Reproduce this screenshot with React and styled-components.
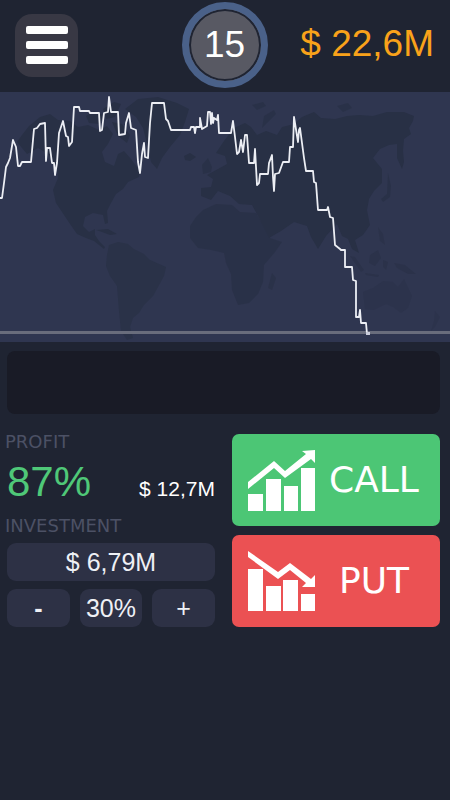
import React, { useState } from "react";
import styled, { createGlobalStyle } from "styled-components";

const GlobalStyle = createGlobalStyle`
  *, *::before, *::after { box-sizing: border-box; }
  body {
    margin: 0;
    background: #1f2432;
    color: #fff;
    font-family: "Liberation Sans", Arial, sans-serif;
  }
  button { font: inherit; color: inherit; border: 0; padding: 0; cursor: pointer; }
`;

const Page = styled.div`
  min-height: 100vh;
  background: #1f2432;
`;

const Header = styled.header`
  display: grid;
  grid-template-columns: 1fr auto 1fr;
  align-items: center;
  height: 92px;
  padding: 0 16px 2px 15px;
`;

const MenuButton = styled.button`
  display: flex;
  flex-direction: column;
  align-items: center;
  justify-content: center;
  gap: 7px;
  width: 63px;
  height: 63px;
  border-radius: 17px;
  background: #383844;
`;

const MenuBar = styled.span`
  width: 42px;
  height: 8px;
  border-radius: 2px;
  background: #fff;
`;

const Countdown = styled.div`
  display: flex;
  align-items: center;
  justify-content: center;
  width: 86px;
  height: 86px;
  border: 7px solid #4a6189;
  border-radius: 50%;
  background: #585963;
  box-shadow: inset 0 0 0 2px #1f2432;
  font-size: 37px;
  line-height: 40px;
`;

const Balance = styled.div`
  justify-self: end;
  color: #f9a21a;
  font-size: 37px;
  line-height: 44px;
  padding-bottom: 2px;
  white-space: nowrap;
`;

const ChartPanel = styled.section`
  height: 250px;
  background: #2f3650;
`;

const ChartSvg = styled.svg`
  display: block;
  width: 100%;
  height: 100%;
`;

const Console = styled.main`
  display: flex;
  flex-direction: column;
  gap: 20px;
  padding: 9px 10px 20px 7px;
`;

const MessagePanel = styled.div`
  height: 63px;
  border-radius: 8px;
  background: #191b26;
`;

const Controls = styled.div`
  display: grid;
  grid-template-columns: 1fr 1fr;
  gap: 17px;
`;

const Column = styled.div`
  display: flex;
  flex-direction: column;
  min-width: 0;
  gap: ${(p) => p.$gap || 0}px;
`;

const Caption = styled.div`
  color: #4c5165;
  font-family: "DejaVu Sans", sans-serif;
  font-size: 18px;
  line-height: 16px;
  margin-left: -2px;
`;

const ProfitRow = styled.div`
  display: flex;
  align-items: baseline;
  justify-content: space-between;
  height: 68px;
  line-height: 64px;
  white-space: nowrap;
`;

const Percent = styled.span`
  color: #4fc878;
  font-size: 42px;
`;

const Payout = styled.span`
  font-size: 21px;
`;

const Fields = styled.div`
  display: flex;
  flex-direction: column;
  gap: 8px;
  padding-top: 9px;
`;

const Stepper = styled.div`
  display: grid;
  grid-template-columns: repeat(3, 1fr);
  gap: 10px;
`;

const Field = styled.output`
  display: flex;
  align-items: center;
  justify-content: center;
  height: 38px;
  border-radius: 9px;
  background: #2d3145;
  color: #eef0f5;
  font-size: 25px;
  line-height: 38px;
  white-space: nowrap;
`;

const StepButton = styled.button`
  && {
    height: 38px;
    border-radius: 9px;
    background: #2d3145;
    color: #eef0f5;
    font-size: 25px;
    font-weight: ${(p) => (p.$strong ? 700 : 400)};
    line-height: 38px;
  }
`;

const TradeButton = styled.button`
  display: flex;
  align-items: center;
  height: 92px;
  border-radius: 7px;
  background: ${(p) => p.$color};

  && { padding: 0 8px 0 16px; }
`;

const TradeIcon = styled.svg`
  flex: none;
  width: 68px;
  height: 61px;
  fill: #fff;
`;

const TradeLabel = styled.span`
  flex: 1;
  font-family: "DejaVu Sans", sans-serif;
  font-size: 36px;
  line-height: 44px;
  text-align: center;
`;

const pricePoints = `0,106 2,106 4,91 6,75 8,71 10,66 13,48 16,55 18,74 20,74 22,70 31,70 34,37 37,36 40,32
45,31 46,69 47,56 50,56 52,71 54,71 55,83 57,71 59,41 63,29 66,44 68,45 69,54 72,50 74,15 79,15 80,19 89,19
90,21 99,21 100,39 102,38 104,21 108,20 109,5 111,20 118,20 119,43 125,42 126,31 129,21 131,36 136,38 138,70
140,81 142,62 144,51 145,65 148,66 150,31 152,11 164,11 166,27 168,29 171,38 190,38 191,35 194,35 195,41
196,35 200,35 200,26 202,37 207,34 208,20 210,20 211,32 212,21 213,31 214,26 217,28 218,23 219,41 231,41
233,29 235,45 237,62 239,60 241,48 243,60 245,43 247,43 249,71 254,71 255,57 257,93 259,91 260,82 268,82
269,71 272,63 273,85 274,99 275,82 279,81 283,70 289,70 290,55 293,55 294,25 298,50 299,38 300,36 302,51
304,66 306,79 313,79 314,90 316,91 318,118 327,118 328,115 330,125 333,126 335,153 340,157 341,158 345,158
345,175 352,175 353,188 356,189 356,225 359,225 360,218 361,231 366,231 367,242 370,242`;

const WorldMap = () => (
  <g fill="#283045">
    {/* North and Central America */}
    <path d="M17 50 22 43 29 34 40 25 50 22 58 28 70 29 78 35 88 33 99 38 107 34 113 42 108 52 102 60 105 70 114 74 118 62 124 59 131 67 140 79 139 85 128 90 123 97 116 102 111 111 107 119 108 131 105 132 103 123 93 121 85 125 83 134 89 140 95 137 95 143 99 149 105 155 104 157 94 149 86 146 77 142 70 132 62 120 56 111 53 98 58 86 57 75 48 62 38 56 27 62Z" />
    <path d="M86 24 94 19 103 23 100 32 89 31ZM103 17 114 10 121 12 115 25 106 27ZM112 30 122 32 130 43 127 51 118 44ZM96 138 108 137 117 142 110 143 102 140Z" />
    {/* Greenland */}
    <path d="M125 17 138 7 158 5 177 11 189 17 185 30 180 43 170 55 162 66 157 77 151 70 148 56 143 36 136 25Z" />
    <path d="M184 64 190 61 196 65 190 69 185 68Z" />
    {/* South America */}
    <path d="M109 153 118 150 128 152 134 157 144 162 150 168 166 175 164 184 158 195 153 204 144 213 139 221 133 226 130 235 133 246 127 248 121 239 119 219 117 194 110 184 106 174 107 163Z" opacity="0.7" />
    {/* Africa */}
    <path d="M203 118 216 112 232 113 240 120 256 121 262 131 270 146 282 150 275 160 264 173 263 190 258 202 249 211 238 213 232 198 231 182 226 171 224 161 211 158 198 156 190 146 190 134 196 125Z" opacity="0.75" />
    <path d="M272 181 276 186 272 198 268 196Z" opacity="0.6" />
    {/* Europe and Asia */}
    <path d="M201 104 201 96 211 95 213 87 207 83 218 77 227 72 225 64 216 61 224 49 234 36 245 31 251 35 257 43 266 39 277 43 282 35 294 32 302 25 314 20 321 26 335 27 347 24 359 23 373 24 387 20 404 20 414 24 413 29 409 36 411 42 404 47 403 59 404 70 402 77 397 66 397 52 389 53 380 57 373 66 382 77 382 91 374 99 369 107 367 118 370 133 363 143 355 148 359 161 352 157 348 147 342 144 337 132 326 144 318 157 311 145 307 134 294 130 281 139 269 146 258 124 252 113 239 112 230 104 218 99 211 108Z" />
    <path d="M202 73 208 66 212 75 211 80 203 82ZM262 36 264 24 274 18 276 22 267 31ZM337 14 348 11 352 16 343 20ZM252 13 263 10 266 14 257 18ZM388 81 391 94 390 105 383 110 381 107 387 102Z" opacity="0.75" />
    {/* South-east Asia and Oceania */}
    <path d="M350 164 355 165 364 178 361 180ZM370 163 378 158 381 166 375 174 369 171ZM365 181 379 183 378 185 366 183ZM378 135 383 142 385 153 380 149ZM394 171 405 173 416 182 408 182 397 176ZM383 168 388 170 386 178 383 175Z" opacity="0.55" />
    <path d="M363 200 373 196 383 189 393 190 398 195 404 187 412 204 408 216 401 221 393 215 386 212 374 218 365 217ZM435 219 440 225 435 235 431 239 434 229Z" opacity="0.4" />
  </g>
);

const PriceChart = () => (
  <ChartSvg viewBox="0 0 450 250" preserveAspectRatio="none" role="img" aria-label="Price chart">
    <WorldMap />
    <rect x="0" y="239" width="450" height="3" fill="#696d7c" />
    <polyline points={pricePoints} fill="none" stroke="#eceef4" strokeWidth="1.8" strokeLinejoin="round" />
    <rect x="366" y="240" width="4" height="3" fill="#c9ccda" />
  </ChartSvg>
);

const RisingIcon = () => (
  <TradeIcon viewBox="0 0 68 61" aria-hidden="true">
    <path d="M0 44h15v17H0zM18 29h15v32H18zM36 36h14v25H36zM53 18h14v43H53z" />
    <path d="M0 32 26 11 37 21 58 4 54 1 67 0 67 13 63 9 37 28 26 18 0 39Z" />
  </TradeIcon>
);

const FallingIcon = () => (
  <TradeIcon viewBox="0 0 68 61" aria-hidden="true">
    <path d="M0 18h15v42H0zM18 35h15v25H18zM35 29h15v31H35zM53 43h14v17H53z" />
    <path d="M0 0 30 21 42 12 63 28 67 24 67 36 54 36 58 32 42 19 30 28 0 6Z" />
  </TradeIcon>
);

export default function App() {
  const [share, setShare] = useState(30);
  return (
    <Page>
      <GlobalStyle />
      <Header>
        <MenuButton type="button" aria-label="Menu">
          <MenuBar />
          <MenuBar />
          <MenuBar />
        </MenuButton>
        <Countdown>15</Countdown>
        <Balance>$ 22,6M</Balance>
      </Header>
      <ChartPanel>
        <PriceChart />
      </ChartPanel>
      <Console>
        <MessagePanel role="status" />
        <Controls>
          <Column>
            <Caption>PROFIT</Caption>
            <ProfitRow>
              <Percent>87%</Percent>
              <Payout>$ 12,7M</Payout>
            </ProfitRow>
            <Caption id="investment">INVESTMENT</Caption>
            <Fields>
              <Field aria-labelledby="investment">$ 6,79M</Field>
              <Stepper>
                <StepButton type="button" $strong aria-label="Decrease" onClick={() => setShare((s) => Math.max(0, s - 10))}>
                  -
                </StepButton>
                <Field>{share}%</Field>
                <StepButton type="button" aria-label="Increase" onClick={() => setShare((s) => Math.min(100, s + 10))}>
                  +
                </StepButton>
              </Stepper>
            </Fields>
          </Column>
          <Column $gap={9}>
            <TradeButton type="button" $color="#4cc675">
              <RisingIcon />
              <TradeLabel>CALL</TradeLabel>
            </TradeButton>
            <TradeButton type="button" $color="#eb5153">
              <FallingIcon />
              <TradeLabel>PUT</TradeLabel>
            </TradeButton>
          </Column>
        </Controls>
      </Console>
    </Page>
  );
}
